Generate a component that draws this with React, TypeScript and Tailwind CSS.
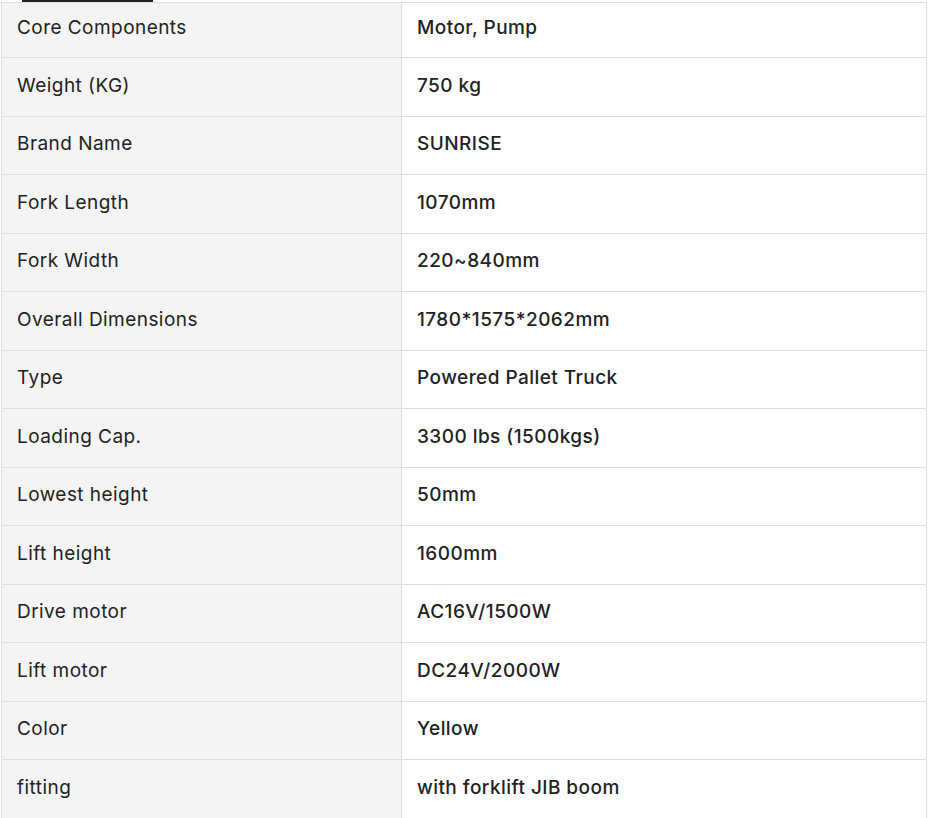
const rows: [string, string][] = [
  ["Core Components", "Motor, Pump"],
  ["Weight (KG)", "750 kg"],
  ["Brand Name", "SUNRISE"],
  ["Fork Length", "1070mm"],
  ["Fork Width", "220~840mm"],
  ["Overall Dimensions", "1780*1575*2062mm"],
  ["Type", "Powered Pallet Truck"],
  ["Loading Cap.", "3300 lbs (1500kgs)"],
  ["Lowest height", "50mm"],
  ["Lift height", "1600mm"],
  ["Drive motor", "AC16V/1500W"],
  ["Lift motor", "DC24V/2000W"],
  ["Color", "Yellow"],
  ["fitting", "with forklift JIB boom"],
];

const App = () => {
  return (
    <div
      className="w-[929px] h-[818px] overflow-hidden bg-white text-[19px] tracking-[0.45px] text-[#222]"
      style={{ fontFamily: "Inter, 'Noto Sans', sans-serif" }}
    >
      <div className="h-[2px] pl-[22px]">
        <div className="w-[131px] h-[2px] bg-[#222]" />
      </div>
      <div className="ml-px w-[926px] border border-[#dedede]">
        {rows.map(([k, v], i) => {
          const pad = i === 0 ? "pb-[4px]" : "pb-[2px]";
          return (
            <div
              key={k}
              className={`flex ${i === rows.length - 1 ? "" : "border-b border-[#dedede]"} ${
                i === 0 ? "h-[55px]" : "h-[58.5px]"
              }`}
            >
              <div
                className={`w-[400px] shrink-0 bg-[#f4f4f4] border-r border-[#dedede] pl-[15px] flex items-center ${pad}`}
              >
                {k}
              </div>
              <div className={`flex-1 pl-[15px] flex items-center font-medium ${pad}`}>{v}</div>
            </div>
          );
        })}
      </div>
    </div>
  );
};

export default App;
